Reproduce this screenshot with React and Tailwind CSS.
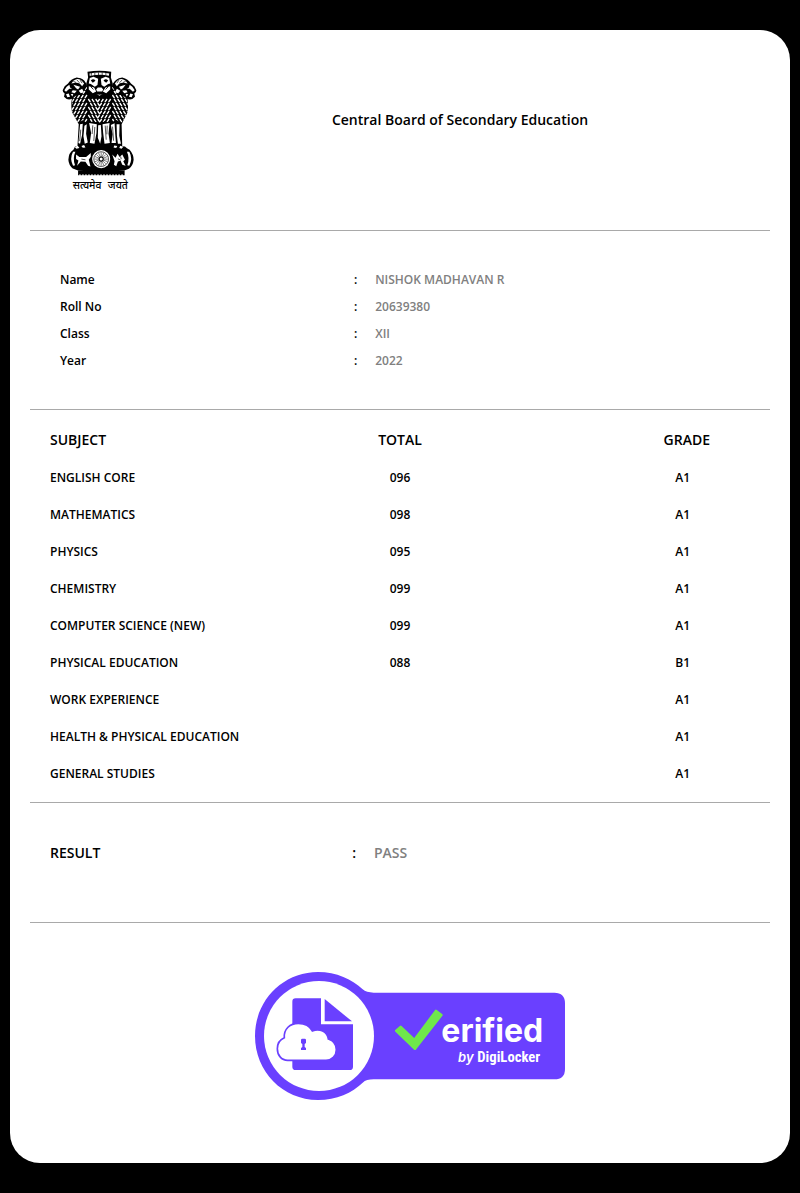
import React from "react";

const details = [
  ["Name", "NISHOK MADHAVAN R"],
  ["Roll No", "20639380"],
  ["Class", "XII"],
  ["Year", "2022"],
];

const subjects = [
  ["ENGLISH CORE", "096", "A1"],
  ["MATHEMATICS", "098", "A1"],
  ["PHYSICS", "095", "A1"],
  ["CHEMISTRY", "099", "A1"],
  ["COMPUTER SCIENCE (NEW)", "099", "A1"],
  ["PHYSICAL EDUCATION", "088", "B1"],
  ["WORK EXPERIENCE", "", "A1"],
  ["HEALTH & PHYSICAL EDUCATION", "", "A1"],
  ["GENERAL STUDIES", "", "A1"],
];

// Short slanted tufts that give the manes their texture.
function maneTufts() {
  const tufts = [];
  for (let row = 0; row < 9; row += 1) {
    const y = 82 + row * 12;
    for (let col = 0; col < 16; col += 1) {
      const x = 66 + col * 11 + (row % 2) * 5;
      const nearCentre = x > 110 && x < 186;
      if (nearCentre && y < 112) continue;
      const side = nearCentre ? (x < 148 ? 1 : -1) : x < 148 ? -1 : 1;
      tufts.push(`M${x} ${y}q${side} 5 ${side * 6} 9`);
    }
  }
  return tufts.join("");
}

function SideHead() {
  return (
    <>
      <path d="M110 80Q102 56 80 54Q62 58 54 72L44 80L38 92Q38 99 44 102L42 112Q52 124 66 118L78 108L96 104Z" />
      <path
        fill="white"
        d="M102 72Q92 58 80 59Q68 63 64 72L76 70Q88 68 96 80ZM58 76L50 82L43 92L48 97L58 88L66 88L60 84ZM70 76L90 82L84 90L78 86ZM68 92L80 94L74 101L64 98ZM86 94L96 88L102 98L92 101ZM48 104L56 102L60 112L52 113ZM62 104L70 103L67 111Z"
      />
      <path d="M80 61l8 9M90 62l6 9M70 66l8 3" stroke="black" strokeWidth="2" fill="none" />
    </>
  );
}

function Emblem() {
  return (
    <svg viewBox="36 32 224 376" className="w-[75px] h-[126px]" role="img" aria-label="State Emblem of India">
      <defs>
        <clipPath id="mane">
          <path d="M84 60Q104 62 112 84L120 104H176L184 84Q196 62 214 62L226 96Q236 130 232 158L214 190L196 180L182 192L164 184L148 194L130 184L114 192L98 182L84 190L66 158Q62 130 72 96Z" />
        </clipPath>
      </defs>
      <path d="M76 58Q104 50 112 84L120 100H176L184 84Q192 52 222 60L228 96Q236 130 232 158L214 194L216 262H82L86 194L66 158Q60 130 70 100Z" />
      <g clipPath="url(#mane)">
        <path d={maneTufts()} stroke="white" strokeWidth="4.2" fill="none" />
      </g>

      <SideHead />
      <g transform="translate(296 0) scale(-1 1)">
        <SideHead />
      </g>

      <path d="M112 37Q148 31 183 37L182 54L188 74L184 94L170 108L148 114L126 108L112 94L108 74L114 54Z" />
      <path
        fill="white"
        d="M118 42Q148 37 177 42L176 49Q148 43 119 50ZM119 56L130 52L144 58L142 77L134 82L122 74L116 72ZM177 56L166 52L152 58L154 77L162 82L174 74L180 72ZM116 80L132 84L138 96L128 101L116 90ZM180 80L166 84L158 96L168 101L180 90ZM143 84h11l5 6l-3 6h-15l-3-6ZM138 103q10 5 20 0l-10 6Z"
      />
      <path d="M122 63q8-7 14 1l-8 6ZM174 63q-8-7-14 1l8 6Z" />
      <path d="M147 58v14M122 82l8 8M174 82l-8 8" stroke="black" strokeWidth="2.5" fill="none" />
      <path d="M124 40l-1 10M134 40v8M145 39v8M156 39v8M167 40v8" stroke="black" strokeWidth="2" />

      <path
        fill="white"
        d="M90 194L98 192L96 226L90 252L85 250ZM103 198L110 194L108 222L113 248L104 252L100 230ZM117 190L140 194L139 220L133 252L119 250L123 220ZM144 197L152 196L154 230L150 252L143 234ZM157 194L178 190L175 222L179 250L163 252L159 220ZM182 196L193 191L195 224L197 250L184 250L187 224ZM199 194L208 194L207 228L212 252L203 252L200 228Z"
      />
      <path d="M128 197l-2 26M134 202l-3 42M165 198l3 42M171 198l-1 26M187 201l3 42M92 210l-3 34" stroke="black" strokeWidth="2" fill="none" />

      <path d="M75 260Q148 250 224 260Q229 266 238 270Q250 284 250 300Q248 318 236 327L222 332Q148 340 84 332L68 326Q56 316 55 300Q56 278 70 270Z" />
      <path d="M69 276Q58 296 69 318L75 316Q67 296 76 276ZM237 276Q248 296 237 318L231 316Q239 296 230 276Z" fill="white" />
      <path d="M74 262l9-4l5 7l-9 2ZM94 259l8-3l4 7l-8 1ZM192 257l9 2l-3 6l-8-2ZM210 258l9 3l-5 6l-7-2Z" fill="white" />
      <path d="M78 284L88 292L108 292L122 280L122 291L116 300L121 320L114 318L106 306L92 305L81 318L85 302L78 298Z" fill="white" />
      <path d="M186 284L196 294L202 282L208 292L216 284L224 300L219 304L226 318L216 315L211 303L203 305L198 319L191 315L193 304Z" fill="white" />
      <path d="M211 290l2 8M203 297l8 4M94 298l12 2" stroke="black" strokeWidth="2" />
      <circle cx="153" cy="298" r="27" fill="white" />
      <circle cx="153" cy="298" r="22" fill="none" stroke="black" strokeWidth="2" />
      <path d="M153 278v40M133 298h40M139 284l28 28M139 312l28-28M145 279l16 38M161 279l-16 38M134 290l38 16M134 306l38-16" stroke="black" strokeWidth="1.5" />
      <circle cx="153" cy="298" r="6" fill="white" stroke="black" strokeWidth="3" />
      <path d="M84 332H223V346H84Z" />
      <path d="M87 346H220" stroke="white" strokeWidth="4" strokeDasharray="5 4" />
      <g fontSize="31" className="font-['Noto_Sans_Devanagari','Lohit_Devanagari','Open_Sans',sans-serif] font-medium">
        <text x="68" y="386">सत्यमेव</text>
        <text x="173" y="386">जयते</text>
      </g>
    </svg>
  );
}

function VerifiedBadge() {
  return (
    <svg viewBox="30 21 930 384" className="w-[310px] h-[128px]" role="img" aria-label="Verified by DigiLocker">
      <path
        fill="#6a40ff"
        d="M219 21C274 21 322 43 353 73Q364 83 386 83H928Q960 83 960 115V312Q960 343 928 343H386Q364 343 353 353C322 383 274 405 219 405C113 405 30 319 30 213S113 21 219 21Z"
      />
      <circle cx="222" cy="213" r="165" fill="white" />
      <path fill="#6a40ff" d="M152 100H228V178H324V305Q324 315 314 315H152Q142 315 142 305V110Q142 100 152 100Z" />
      <path fill="#6a40ff" d="M239 102L321 169H239Z" />
      <path
        fill="white"
        stroke="#6a40ff"
        strokeWidth="5"
        d="M128 286C109 286 97 270 97 251C97 234 106 223 118 218C116 192 135 175 160 175C180 175 195 184 202 198C224 189 247 200 250 222C265 227 274 239 274 254C274 273 260 286 243 286Z"
      />
      <path fill="#6a40ff" d="M168 225Q168 221 172 221H179Q183 221 183 225V234L179 237V246L183 249V255H168V249L172 246V237L168 234Z" />
      <path
        fill="#6fe84b"
        stroke="#6fe84b"
        strokeWidth="8"
        strokeLinejoin="round"
        d="M454 197L467 186L508 225L573 138L589 150L510 251Z"
      />
      <text x="589" y="230" fontSize="96" fill="white" className="font-['Inter',sans-serif] font-bold">erified</text>
      <text x="639" y="292" fontSize="39" fill="white" className="font-['Inter',sans-serif] font-semibold italic">by</text>
      <text x="697" y="292" fontSize="44" fill="white" className="font-['Liberation_Sans_Narrow','Roboto_Condensed','Roboto',sans-serif] font-bold">DigiLocker</text>
    </svg>
  );
}

export default function App() {
  return (
    <div className="min-h-screen bg-black px-[10px] py-[30px] font-['Open_Sans',sans-serif] font-semibold text-black">
      <main className="rounded-[30px] bg-white px-5 pb-[63px]">
        <header className="flex h-[201px] items-start border-b border-[#a9a9a9] pt-10">
          <div className="flex w-[120px] shrink-0 justify-end pr-[13px]">
            <Emblem />
          </div>
          <h1 className="flex-1 pt-10 text-center text-sm leading-5">Central Board of Secondary Education</h1>
        </header>

        <dl className="border-b border-[#a9a9a9] px-[30px] py-[35px] text-xs leading-[27px]">
          {details.map(([label, value]) => (
            <div key={label} className="grid grid-cols-[44%_1fr]">
              <dt className="flex justify-between pr-[2px]">
                <span>{label}</span>
                <span>:</span>
              </dt>
              <dd className="pl-4 text-[#808080]">{value}</dd>
            </div>
          ))}
        </dl>

        <div className="border-b border-[#a9a9a9] px-5 py-[10px]">
          <table className="w-full table-fixed text-xs">
            <colgroup>
              <col className="w-[38%]" />
              <col className="w-[24%]" />
              <col className="w-[38%]" />
            </colgroup>
            <thead>
              <tr className="h-[39px] text-sm">
                <th className="text-left font-semibold">SUBJECT</th>
                <th className="text-center font-semibold">TOTAL</th>
                <th className="pr-10 text-right font-semibold">GRADE</th>
              </tr>
            </thead>
            <tbody>
              {subjects.map(([subject, total, grade]) => (
                <tr key={subject} className="h-[37px]">
                  <td className="whitespace-nowrap">{subject}</td>
                  <td className="text-center">{total}</td>
                  <td className="pr-[60px] text-right">{grade}</td>
                </tr>
              ))}
            </tbody>
          </table>
        </div>

        <dl className="grid grid-cols-[44%_1fr] border-b border-[#a9a9a9] px-5 pt-10 pb-[59px] text-sm leading-5">
          <dt className="flex justify-between pr-[2px]">
            <span>RESULT</span>
            <span>:</span>
          </dt>
          <dd className="pl-4 text-[#808080]">PASS</dd>
        </dl>

        <footer className="flex justify-center pt-[49px] pl-5">
          <VerifiedBadge />
        </footer>
      </main>
    </div>
  );
}
